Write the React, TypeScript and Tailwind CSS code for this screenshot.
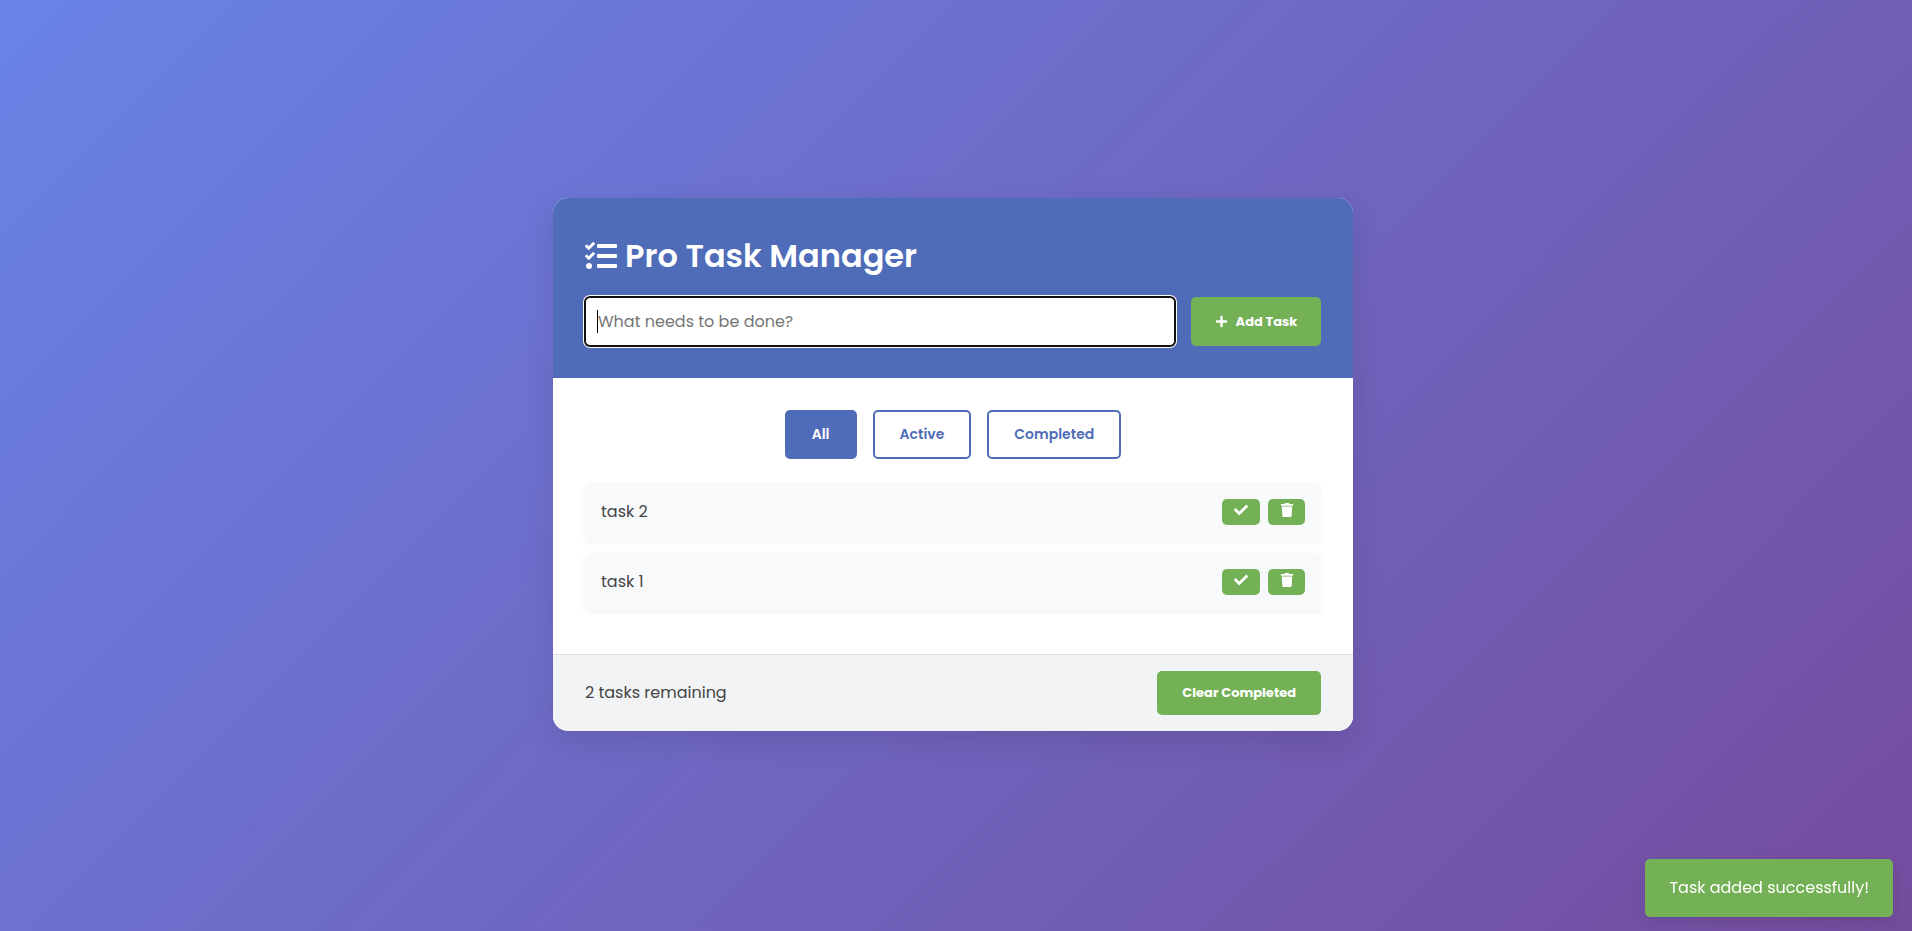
import { useState } from "react";
import type { FormEvent } from "react";
import { FaCheck, FaPlus, FaTasks, FaTrash } from "react-icons/fa";

type Filter = "All" | "Active" | "Completed";
type Task = { id: number; title: string; done: boolean };

const filters: Filter[] = ["All", "Active", "Completed"];

export default function App() {
  const [tasks, setTasks] = useState<Task[]>([
    { id: 2, title: "task 2", done: false },
    { id: 1, title: "task 1", done: false },
  ]);
  const [filter, setFilter] = useState<Filter>("All");
  const [draft, setDraft] = useState("");

  const visible = tasks.filter(
    (t) => filter === "All" || (filter === "Completed") === t.done,
  );
  const remaining = tasks.filter((t) => !t.done).length;

  function addTask(e: FormEvent) {
    e.preventDefault();
    const title = draft.trim();
    if (!title) return;
    setTasks([{ id: Date.now(), title, done: false }, ...tasks]);
    setDraft("");
  }

  return (
    <div className="flex min-h-screen items-center justify-center bg-linear-[135deg,#6983e7,#744c9e] pr-1.5 pb-0.5 font-[Poppins,Inter,sans-serif] text-base text-[#444444]">
      <main className="w-full max-w-[800px] overflow-hidden rounded-[15px] bg-white shadow-[0_10px_30px_rgba(0,0,0,0.1)]">
        <header className="bg-[#4f6cb8] p-8 text-white">
          <h1 className="mb-4 flex items-center gap-2 text-[32px] leading-[51px] font-semibold">
            <FaTasks className="size-8" aria-hidden="true" />
            Pro Task Manager
          </h1>
          <form className="flex gap-4" onSubmit={addTask}>
            <div className="relative flex-1">
              <input
                type="text"
                aria-label="New task"
                placeholder="What needs to be done?"
                value={draft}
                onChange={(e) => setDraft(e.target.value)}
                className="h-[49px] w-full rounded-[5px] border border-[#101010] bg-white px-3 text-base text-[#333333] shadow-[0_0_0_1px_#101010,0_0_0_2px_#ffffff] outline-none placeholder:text-[#757575]"
              />
              {draft === "" && (
                <span className="pointer-events-none absolute top-[13px] left-3 h-[23px] w-px bg-black" />
              )}
            </div>
            <button
              type="submit"
              className="flex h-[49px] w-[130px] items-center justify-center gap-2 rounded-[5px] bg-[#74b056] text-[13px] font-bold text-white"
            >
              <FaPlus className="size-[13px]" aria-hidden="true" />
              Add Task
            </button>
          </form>
        </header>

        <section className="p-8 pb-[43px]">
          <div className="mb-6 flex justify-center gap-4">
            {filters.map((name) => (
              <button
                key={name}
                type="button"
                onClick={() => setFilter(name)}
                className={
                  "h-[49px] rounded-[5px] border-2 border-[#4f6cb8] px-[25px] text-[14px] font-semibold " +
                  (filter === name ? "bg-[#4f6cb8] text-white" : "bg-white text-[#4f6cb8]")
                }
              >
                {name}
              </button>
            ))}
          </div>
          <ul className="flex flex-col gap-3">
            {visible.map((task) => (
              <li
                key={task.id}
                className="flex items-center justify-between rounded-[5px] bg-[#f8f9fb] p-4 shadow-[0_2px_5px_rgba(0,0,0,0.05)]"
              >
                <span className={task.done ? "line-through opacity-60" : ""}>{task.title}</span>
                <div className="flex gap-2">
                  <button
                    type="button"
                    aria-label={`Complete ${task.title}`}
                    onClick={() =>
                      setTasks(tasks.map((t) => (t.id === task.id ? { ...t, done: !t.done } : t)))
                    }
                    className="flex h-[26px] w-[38px] items-start justify-center rounded-[5px] bg-[#74b056] pt-1 text-white"
                  >
                    <FaCheck className="size-[14px]" aria-hidden="true" />
                  </button>
                  <button
                    type="button"
                    aria-label={`Delete ${task.title}`}
                    onClick={() => setTasks(tasks.filter((t) => t.id !== task.id))}
                    className="flex h-[26px] w-[37px] items-start justify-center rounded-[5px] bg-[#74b056] pt-1 text-white"
                  >
                    <FaTrash className="size-[14px]" aria-hidden="true" />
                  </button>
                </div>
              </li>
            ))}
          </ul>
        </section>

        <footer className="flex items-center justify-between border-t border-[#dee2e6] bg-[#f1f3f5] px-8 py-4">
          <span>{remaining} tasks remaining</span>
          <button
            type="button"
            onClick={() => setTasks(tasks.filter((t) => !t.done))}
            className="h-11 rounded-[5px] bg-[#74b056] px-[25px] text-[13px] font-bold text-white"
          >
            Clear Completed
          </button>
        </footer>
      </main>

      <div
        role="status"
        className="fixed right-[19px] bottom-[14px] rounded-[5px] bg-[#74b056] px-6 py-4 text-base leading-[26px] text-white shadow-[0_5px_15px_rgba(0,0,0,0.1)]"
      >
        Task added successfully!
      </div>
    </div>
  );
}
